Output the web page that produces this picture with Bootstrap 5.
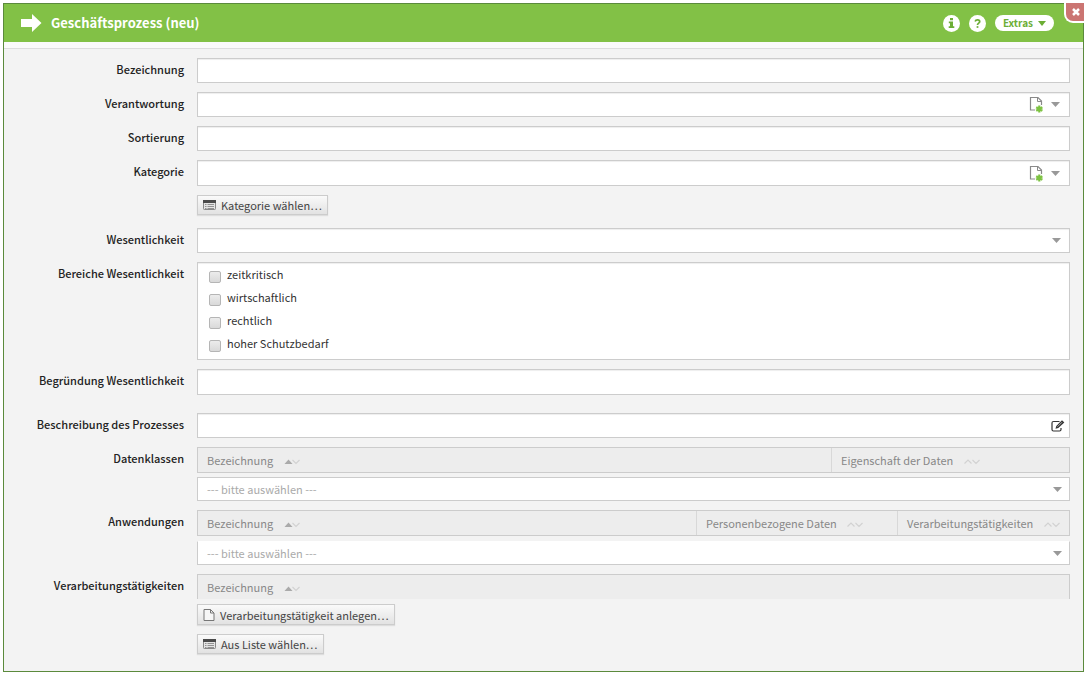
<!DOCTYPE html>
<html lang="de">
<head>
<meta charset="utf-8">
<meta name="viewport" content="width=device-width, initial-scale=1">
<title>Geschäftsprozess (neu)</title>
<link href="https://cdn.jsdelivr.net/npm/bootstrap@5.3.0/dist/css/bootstrap.min.css" rel="stylesheet">
<style>
  body { font-family: "Noto Sans CJK SC", "Noto Sans", sans-serif; font-size: 11px; line-height: 20px; color: #333; background: #fff; }
  .dialog { margin: 3px 2px 3px 3px; border: 1px solid #5b8a3c; background: #f3f3f3; }
  .dialog-head { height: 38px; background: #82c146; color: #fff; padding: 0 29px 0 16px; }
  .dialog-title { font-size: 13px; line-height: 20px; font-weight: 700; margin: 0 0 0 9px; }
  .dialog-strip { height: 7px; background: #fafafa; border-bottom: 1px solid #ddd; }
  .dialog-close { top: -1px; right: -1px; width: 20px; height: 20px; padding: 0 0 0 2px; background: #cb7572; border: solid #fff; border-width: 0 0 2px 2px; border-radius: 0 0 0 9px; }
  .head-actions { gap: 9px; }
  .round-btn { width: 17px; height: 17px; border: 0; padding: 0; border-radius: 50%; background: #fff; }
  .extras-btn { height: 16px; border: 0; padding: 0 8px; border-radius: 8px; background: #fff; color: #6cae35; font-size: 10px; line-height: 16px; font-weight: 700; gap: 5px; }
  .dialog-body { padding: 9px 13px 17px 16px; gap: 9px; }
  .form-line { display: grid; grid-template-columns: 164px minmax(0, 1fr); column-gap: 13px; }
  .form-line.spaced { padding-bottom: 9px; }
  .line-label { text-align: right; font-weight: 500; color: #222; line-height: 22px; white-space: nowrap; }
  .box { display: block; width: 100%; height: 25px; border: 1px solid #ccc; border-radius: 0; background-color: #fff; box-shadow: inset 0 1px 1px #eee; padding: 0 9px; color: #333; }
  .box.tall { height: 26px; }
  .box input { border: 0; background: none; outline: 0; min-width: 0; }
  .box button { border: 0; background: none; padding: 0; }
  select.box { appearance: none; background: #fff url("data:image/svg+xml,%3Csvg xmlns='http://www.w3.org/2000/svg' width='9' height='5'%3E%3Cpath d='M0 0h9L4.500 5z' fill='%23999'/%3E%3C/svg%3E") no-repeat right 8px center; }
  select.pick { height: 24px; color: #aaa; background-position: right 7px center; box-shadow: none; }
  .checks { height: auto; padding: 0 11px 4px; }
  .check-line { height: 23px; line-height: 22px; gap: 6px; }
  .check-line input { appearance: none; width: 12px; height: 12px; margin: 8px 0 0; border: 1px solid #b5b5b5; border-radius: 2px; background: linear-gradient(#ececec, #d9d9d9); }
  .check-line input:checked { background: #82c146; }
  .list-head { width: 100%; table-layout: fixed; border-collapse: separate; border-spacing: 0; border: 1px solid #ccc; background: #ededed; color: #888; }
  .list-head th { height: 24px; padding: 0 9px; font-weight: 400; line-height: 24px; white-space: nowrap; }
  .list-head th + th { border-left: 1px solid #d8d8d8; }
  .list-head svg { margin-left: 8px; }
  .list-head.wide-gap { margin-bottom: 5px; }
  .col-a { width: 238px; } .col-b { width: 201px; } .col-c { width: 172px; }
  .tool-btn { height: 20px; padding: 0 5px; gap: 5px; border: 1px solid #ccc; background: linear-gradient(#fafafa, #e2e2e2); box-shadow: 0 1px 1px #ddd; color: #444; line-height: 18px; }
  .tool-btn.tall { height: 21px; }
  .stack { gap: 9px; }
  .pick.open-top { border-top-color: #fff; }
  .list-head.open-bottom { border-bottom: 0; }
</style>
</head>
<body>
<svg class="d-none" aria-hidden="true">
  <symbol id="caret" viewBox="0 0 9 5"><path d="M0 0h9L4.500 5z" fill="#999"/></symbol>
  <symbol id="newfile" viewBox="0 0 14 17">
    <path d="M6 14H1.500V1.500H9L12.500 5v4" fill="none" stroke="#8a8a8a" stroke-width="1.200"/>
    <path d="M8.500 1.500V5.500h4" fill="none" stroke="#8a8a8a"/>
    <path d="M10.300 9.500v7M7.200 11.200l6.200 3.600M7.200 14.800l6.200-3.600" stroke="#7dc242" stroke-width="2.200"/>
  </symbol>
  <symbol id="listicon" viewBox="0 0 13 11">
    <rect x=".5" y=".5" width="12" height="9" rx=".8" fill="#e4e4e4" stroke="#888"/>
    <path d="M0 0h13v3H0z" fill="#4a4a4a"/>
    <path d="M2 4.500h1.500M2 6.500h1.500M2 8.500h1.500M4.500 4.500H11M4.500 6.500H11M4.500 8.500H11" stroke="#888" stroke-width=".9"/>
  </symbol>
  <symbol id="sorted" viewBox="0 0 16 6"><path d="M.5 5l4-4.500L8.500 5z" fill="#aaa"/><path d="M8.500 1l3.500 3.500L15.500 1" fill="none" stroke="#d2d2d2" stroke-width="1.200"/></symbol>
  <symbol id="unsorted" viewBox="0 0 16 6"><path d="M.5 4.500L4 1l3.500 3.500M8.500 1l3.500 3.500L15.500 1" fill="none" stroke="#d2d2d2" stroke-width="1.200"/></symbol>
</svg>

<main class="dialog position-relative">
  <header class="dialog-head d-flex align-items-center">
    <svg width="22" height="20" viewBox="0 0 22 20" aria-hidden="true"><path d="M1 6h11V1l9.500 9L12 19v-5H1z" fill="#fff"/></svg>
    <h1 class="dialog-title me-auto">Geschäftsprozess (neu)</h1>
    <div class="head-actions d-flex align-items-center">
      <button type="button" class="round-btn d-flex align-items-center justify-content-center" aria-label="Info">
        <svg width="7" height="10" viewBox="0 0 7 10"><path d="M2 0h3v2.200H2zM.8 3.500H5v4.700h1.300V10H.7V8.200H2V5.300H.8z" fill="#6cae35"/></svg>
      </button>
      <button type="button" class="round-btn d-flex align-items-center justify-content-center" aria-label="Hilfe">
        <svg width="7" height="9" viewBox="0 0 8 10"><path d="M1.300 2.600C2 .4 6.500.3 6.500 3 6.500 4.700 4 4.500 4 6.700" fill="none" stroke="#6cae35" stroke-width="2"/><path d="M3 8h2v2H3z" fill="#6cae35"/></svg>
      </button>
      <button type="button" class="extras-btn d-flex align-items-center">Extras
        <svg width="8" height="5" viewBox="0 0 8 5" aria-hidden="true"><path d="M0 0h8L4 5z" fill="#6cae35"/></svg>
      </button>
    </div>
  </header>
  <button type="button" class="dialog-close position-absolute d-flex align-items-center justify-content-center" aria-label="Schließen">
    <svg width="8" height="8" viewBox="0 0 8 8"><path d="M1 1l6 6M7 1L1 7" stroke="#fff" stroke-width="2.500"/></svg>
  </button>
  <div class="dialog-strip"></div>

  <form class="dialog-body d-flex flex-column">
    <div class="form-line"><label class="line-label" for="bez">Bezeichnung</label><input id="bez" type="text" class="box"></div>
    <div class="form-line"><label class="line-label" for="ver">Verantwortung</label>
      <div class="box d-flex align-items-center"><input id="ver" type="text" class="flex-grow-1">
        <button type="button" class="d-flex me-2" aria-label="Neu anlegen"><svg width="14" height="17"><use href="#newfile"/></svg></button>
        <button type="button" class="d-flex" aria-label="Auswahl öffnen"><svg width="9" height="5"><use href="#caret"/></svg></button></div></div>
    <div class="form-line"><label class="line-label" for="sort">Sortierung</label><input id="sort" type="text" class="box"></div>
    <div class="form-line"><label class="line-label" for="kat">Kategorie</label>
      <div class="stack d-flex flex-column align-items-start pb-1">
        <div class="box tall d-flex align-items-center"><input id="kat" type="text" class="flex-grow-1">
          <button type="button" class="d-flex me-2" aria-label="Neu anlegen"><svg width="14" height="17"><use href="#newfile"/></svg></button>
          <button type="button" class="d-flex" aria-label="Auswahl öffnen"><svg width="9" height="5"><use href="#caret"/></svg></button></div>
        <button type="button" class="tool-btn d-flex align-items-center"><svg width="13" height="11" aria-hidden="true"><use href="#listicon"/></svg>Kategorie wählen…</button>
      </div></div>
    <div class="form-line"><label class="line-label" for="wes">Wesentlichkeit</label><select id="wes" class="box"><option></option></select></div>
    <div class="form-line" role="group" aria-labelledby="bereiche"><span class="line-label" id="bereiche">Bereiche Wesentlichkeit</span>
      <div class="box checks">
        <label class="check-line d-flex align-items-start"><input type="checkbox">zeitkritisch</label>
        <label class="check-line d-flex align-items-start"><input type="checkbox">wirtschaftlich</label>
        <label class="check-line d-flex align-items-start"><input type="checkbox">rechtlich</label>
        <label class="check-line d-flex align-items-start"><input type="checkbox">hoher Schutzbedarf</label>
      </div></div>
    <div class="form-line spaced"><label class="line-label" for="beg">Begründung Wesentlichkeit</label><input id="beg" type="text" class="box tall"></div>
    <div class="form-line"><label class="line-label" for="bes">Beschreibung des Prozesses</label>
      <div class="box d-flex align-items-center pe-1"><input id="bes" type="text" class="flex-grow-1">
        <button type="button" class="d-flex" aria-label="Bearbeiten"><svg width="14" height="12" viewBox="0 0 14 12"><path d="M8.500 1.500H2.500Q1 1.500 1 3V9.500Q1 11 2.500 11H8.500Q10 11 10 9.500V8" fill="none" stroke="#333" stroke-width="1.200"/><path d="M4.500 8.800l.8-2.800L11 .3l2.300 2.200L7.300 8z" fill="#333"/><path d="M6.500 6.700L11 2.200" stroke="#ddd" stroke-width=".7"/></svg></button></div></div>
    <div class="form-line"><label class="line-label" for="dat">Datenklassen</label>
      <div>
        <table class="list-head mb-1"><thead><tr><th>Bezeichnung <svg width="16" height="6"><use href="#sorted"/></svg></th><th class="col-a">Eigenschaft der Daten <svg width="16" height="6"><use href="#unsorted"/></svg></th></tr></thead></table>
        <select id="dat" class="box pick"><option>--- bitte auswählen ---</option></select>
      </div></div>
    <div class="form-line"><label class="line-label" for="anw">Anwendungen</label>
      <div>
        <table class="list-head wide-gap"><thead><tr><th>Bezeichnung <svg width="16" height="6"><use href="#sorted"/></svg></th><th class="col-b">Personenbezogene Daten <svg width="16" height="6"><use href="#unsorted"/></svg></th><th class="col-c">Verarbeitungstätigkeiten <svg width="16" height="6"><use href="#unsorted"/></svg></th></tr></thead></table>
        <select id="anw" class="box pick open-top"><option>--- bitte auswählen ---</option></select>
      </div></div>
    <div class="form-line"><span class="line-label">Verarbeitungstätigkeiten</span>
      <div>
        <table class="list-head open-bottom wide-gap"><thead><tr><th>Bezeichnung <svg width="16" height="6"><use href="#sorted"/></svg></th></tr></thead></table>
        <div class="stack d-flex flex-column align-items-start">
          <button type="button" class="tool-btn tall d-flex align-items-center"><svg width="12" height="12" viewBox="0 0 12 12" aria-hidden="true"><path d="M1 .5h6.500l3.500 3.500v7.500H1zM7.500.5V4H11" fill="#f6f6f6" stroke="#777"/></svg>Verarbeitungstätigkeit anlegen…</button>
          <button type="button" class="tool-btn d-flex align-items-center"><svg width="13" height="11" aria-hidden="true"><use href="#listicon"/></svg>Aus Liste wählen…</button>
        </div>
      </div></div>
  </form>
</main>
<script src="https://cdn.jsdelivr.net/npm/bootstrap@5.3.0/dist/js/bootstrap.bundle.min.js"></script>
</body>
</html>
